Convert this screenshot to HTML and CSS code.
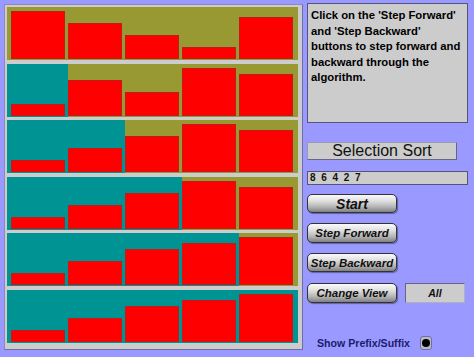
FILE: index.html
```html
<!DOCTYPE html>
<html>
<head>
<meta charset="utf-8">
<link rel="stylesheet" href="styles.css">
</head>
<body>
<div class="panel">
  <div class="rows">
    <div class="row">
      <div class="cell todo"><div class="bar" style="height:48px"></div></div>
      <div class="cell todo"><div class="bar" style="height:36px"></div></div>
      <div class="cell todo"><div class="bar" style="height:24px"></div></div>
      <div class="cell todo"><div class="bar" style="height:12px"></div></div>
      <div class="cell todo"><div class="bar" style="height:42px"></div></div>
    </div>
    <div class="row">
      <div class="cell done"><div class="bar" style="height:12px"></div></div>
      <div class="cell todo"><div class="bar" style="height:36px"></div></div>
      <div class="cell todo"><div class="bar" style="height:24px"></div></div>
      <div class="cell todo"><div class="bar" style="height:48px"></div></div>
      <div class="cell todo"><div class="bar" style="height:42px"></div></div>
    </div>
    <div class="row">
      <div class="cell done"><div class="bar" style="height:12px"></div></div>
      <div class="cell done"><div class="bar" style="height:24px"></div></div>
      <div class="cell todo"><div class="bar" style="height:36px"></div></div>
      <div class="cell todo"><div class="bar" style="height:48px"></div></div>
      <div class="cell todo"><div class="bar" style="height:42px"></div></div>
    </div>
    <div class="row">
      <div class="cell done"><div class="bar" style="height:12px"></div></div>
      <div class="cell done"><div class="bar" style="height:24px"></div></div>
      <div class="cell done"><div class="bar" style="height:36px"></div></div>
      <div class="cell todo"><div class="bar" style="height:48px"></div></div>
      <div class="cell todo"><div class="bar" style="height:42px"></div></div>
    </div>
    <div class="row">
      <div class="cell done"><div class="bar" style="height:12px"></div></div>
      <div class="cell done"><div class="bar" style="height:24px"></div></div>
      <div class="cell done"><div class="bar" style="height:36px"></div></div>
      <div class="cell done"><div class="bar" style="height:42px"></div></div>
      <div class="cell todo"><div class="bar" style="height:48px"></div></div>
    </div>
    <div class="row">
      <div class="cell done"><div class="bar" style="height:12px"></div></div>
      <div class="cell done"><div class="bar" style="height:24px"></div></div>
      <div class="cell done"><div class="bar" style="height:36px"></div></div>
      <div class="cell done"><div class="bar" style="height:42px"></div></div>
      <div class="cell done"><div class="bar" style="height:48px"></div></div>
    </div>
  </div>
</div>
<div class="side">
  <div class="info">Click on the 'Step Forward' and 'Step Backward' buttons to step forward and backward through the algorithm.</div>
  <div class="title">Selection Sort</div>
  <div class="input">8 6 4 2 7</div>
  <button class="btn btn-start">Start</button>
  <button class="btn btn-fwd">Step Forward</button>
  <button class="btn btn-back">Step Backward</button>
  <div class="change-row">
    <button class="btn btn-change">Change View</button>
    <div class="all">All</div>
  </div>
  <div class="show-row">
    <span class="show-label">Show Prefix/Suffix</span>
    <span class="radio"><span class="dot"></span></span>
  </div>
</div>
</body>
</html>
```

FILE: styles.css
```css
html, body {
  margin: 0;
  padding: 0;
}
body {
  width: 474px;
  height: 357px;
  background: #9999ff;
  display: flex;
  align-items: flex-start;
  padding: 3px 0 0 4px;
  box-sizing: border-box;
  font-family: "Liberation Sans", Arial, sans-serif;
  overflow: hidden;
}
.panel {
  margin-top: 1px;
  width: 299px;
  height: 346px;
  box-sizing: border-box;
  background: #cccccc;
  border: 1px solid #6e6e9e;
  border-top-color: #8a8ab8;
  border-left-color: #8a8ab8;
  padding: 2px 4px 6px 2px;
}
.rows {
  display: grid;
  grid-template-rows: repeat(6, 1fr);
  row-gap: 3.5px;
  height: 336px;
}
.row {
  display: grid;
  grid-template-columns: 61px 57px 57px 57px 59px;
}
.cell {
  display: flex;
  align-items: flex-end;
  padding: 0 3px 1px 0;
}
.cell:first-child {
  padding-left: 4px;
}
.cell:last-child {
  padding-right: 5px;
}
.todo {
  background: #999933;
}
.done {
  background: #009393;
}
.bar {
  flex: 1;
  box-sizing: border-box;
  background: #ff0000;
  border: 1px solid rgba(120, 60, 60, 0.45);
}
.side {
  width: 161px;
  margin-left: 4px;
  display: flex;
  flex-direction: column;
  align-items: flex-start;
}
.info {
  width: 161px;
  height: 120px;
  box-sizing: border-box;
  background: #cccccc;
  border: 1px solid #55557a;
  padding: 4px 3px 0 3px;
  font-weight: bold;
  font-size: 11.3px;
  line-height: 15.5px;
  color: #000;
}
.title {
  margin-top: 19px;
  width: 150px;
  height: 18px;
  box-sizing: border-box;
  background: #cccccc;
  border: 1px solid #9a9ab0;
  border-right-color: #666680;
  border-bottom-color: #666680;
  font-size: 16px;
  line-height: 16px;
  text-align: center;
  color: #111;
}
.input {
  margin-top: 11px;
  width: 161px;
  height: 14px;
  box-sizing: border-box;
  background: #cccccc;
  border: 1px solid #55557a;
  padding-left: 2px;
  font-size: 10px;
  font-weight: bold;
  letter-spacing: 1.2px;
  word-spacing: 0.5px;
  line-height: 12px;
  color: #111;
}
.btn {
  width: 90px;
  height: 20px;
  box-sizing: border-box;
  border: 1px solid #333;
  border-radius: 5px;
  background: linear-gradient(#fafafa 0%, #e0e0e0 35%, #b4b4b4 70%, #808080 100%);
  font-family: "Liberation Sans", Arial, sans-serif;
  font-weight: bold;
  font-style: italic;
  font-size: 11.5px;
  color: #111;
  padding: 0;
  margin: 0;
  box-shadow: 1px 1px 1px rgba(40, 40, 80, 0.5);
}
.btn-start {
  margin-top: 9px;
  height: 19px;
  font-size: 14px;
}
.btn-fwd {
  margin-top: 10px;
}
.btn-back {
  margin-top: 10px;
  height: 19px;
}
.change-row {
  margin-top: 11px;
  display: flex;
  align-items: center;
}
.all {
  margin-left: 8px;
  width: 60px;
  height: 20px;
  box-sizing: border-box;
  background: #cccccc;
  border: 1px solid #666680;
  border-right-color: #b0b0c0;
  border-bottom-color: #b0b0c0;
  font-weight: bold;
  font-style: italic;
  font-size: 10.5px;
  line-height: 18px;
  text-align: center;
  color: #111;
}
.show-row {
  margin-top: 33px;
  padding-left: 10px;
  display: flex;
  align-items: center;
  height: 14px;
}
.show-label {
  font-weight: bold;
  font-size: 10.6px;
  color: #1c1c6c;
}
.radio {
  margin-left: 10px;
  width: 12px;
  height: 14px;
  box-sizing: border-box;
  border-radius: 3px;
  background: #b8b8c8;
  border: 1px solid #7070a0;
  display: flex;
  align-items: center;
  justify-content: center;
}
.dot {
  width: 8px;
  height: 8px;
  border-radius: 50%;
  background: #000;
}
```
